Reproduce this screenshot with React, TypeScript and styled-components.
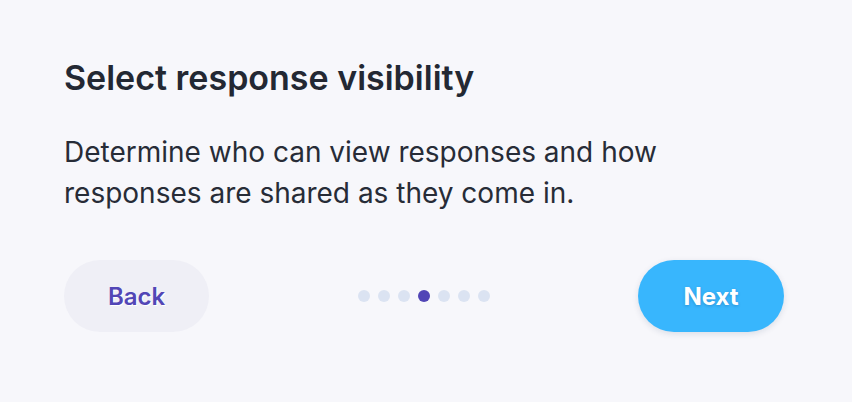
import React from 'react';
import styled, { createGlobalStyle } from 'styled-components';

const GlobalStyle = createGlobalStyle`
  html, body {
    margin: 0;
    padding: 0;
    background: #f7f7fb;
  }
  body {
    font-family: Inter, 'Liberation Sans', Arial, sans-serif;
    -webkit-font-smoothing: antialiased;
  }
`;

const Page = styled.div`
  width: 852px;
  height: 402px;
  box-sizing: border-box;
  padding: 57px 68px 0 64px;
  background: #f7f7fb;
`;

const Title = styled.h1`
  margin: 0;
  font-size: 34px;
  line-height: 41px;
  font-weight: 600;
  color: #232833;
`;

const Description = styled.p`
  margin: 34px 0 0;
  font-size: 28px;
  line-height: 41px;
  font-weight: 400;
  color: #272c37;
`;

const Footer = styled.div`
  display: flex;
  align-items: center;
  justify-content: space-between;
  margin-top: 46px;
`;

const PillButton = styled.button<{ $primary?: boolean }>`
  height: 72px;
  width: ${(p) => (p.$primary ? '146px' : '145px')};
  border: none;
  border-radius: 36px;
  padding: 0;
  font-family: inherit;
  font-size: 24px;
  font-weight: ${(p) => (p.$primary ? 700 : 600)};
  cursor: pointer;
  background: ${(p) => (p.$primary ? '#38b6fd' : '#efeff6')};
  color: ${(p) => (p.$primary ? '#ffffff' : '#5246b6')};
  text-shadow: ${(p) =>
    p.$primary ? '0 1px 3px rgba(0, 40, 90, 0.25)' : '1px 1px 0 #ffffff'};
  box-shadow: ${(p) => (p.$primary ? '0 2px 6px rgba(20, 40, 80, 0.12)' : 'none')};
`;

const Dots = styled.div`
  display: flex;
  gap: 8px;
`;

const Dot = styled.span<{ $active?: boolean }>`
  width: 12px;
  height: 12px;
  border-radius: 50%;
  background: ${(p) => (p.$active ? '#5145b6' : '#dbe3f2')};
`;

const STEPS = 7;
const CURRENT = 3;

const App = () => {
  return (
    <>
      <GlobalStyle />
      <Page>
        <Title>Select response visibility</Title>
        <Description>
          Determine who can view responses and how responses are shared as they come in.
        </Description>
        <Footer>
          <PillButton>Back</PillButton>
          <Dots>
            {Array.from({ length: STEPS }).map((_, i) => (
              <Dot key={i} $active={i === CURRENT} />
            ))}
          </Dots>
          <PillButton $primary>Next</PillButton>
        </Footer>
      </Page>
    </>
  );
};

export default App;
